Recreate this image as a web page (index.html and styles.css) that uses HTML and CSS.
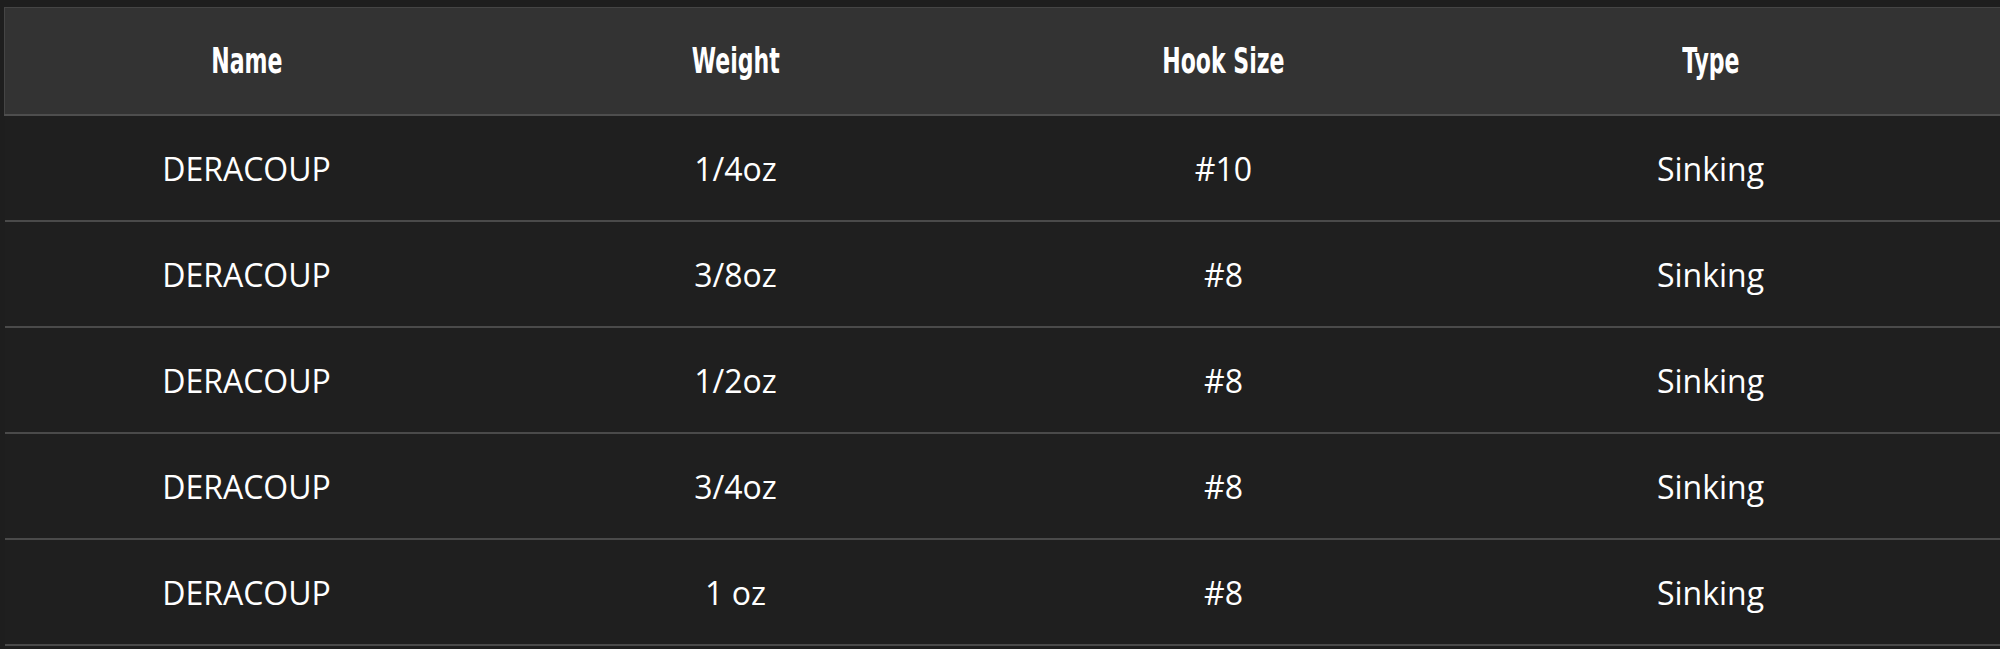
FILE: index.html
```html
<!DOCTYPE html>
<html>
<head>
<meta charset="utf-8">
<link rel="stylesheet" href="styles.css">
</head>
<body>
<div class="wrap">
  <table class="spec">
    <colgroup>
      <col class="c1">
      <col class="c2">
      <col class="c3">
      <col class="c4">
    </colgroup>
    <thead>
      <tr>
        <th><span class="hd">Name</span></th>
        <th><span class="hd">Weight</span></th>
        <th><span class="hd">Hook Size</span></th>
        <th class="last"><span class="hd">Type</span></th>
      </tr>
    </thead>
    <tbody>
      <tr><td>DERACOUP</td><td>1/4oz</td><td>#10</td><td class="last">Sinking</td></tr>
      <tr><td>DERACOUP</td><td>3/8oz</td><td>#8</td><td class="last">Sinking</td></tr>
      <tr><td>DERACOUP</td><td>1/2oz</td><td>#8</td><td class="last">Sinking</td></tr>
      <tr><td>DERACOUP</td><td>3/4oz</td><td>#8</td><td class="last">Sinking</td></tr>
      <tr><td>DERACOUP</td><td>1 oz</td><td>#8</td><td class="last">Sinking</td></tr>
    </tbody>
  </table>
</div>
</body>
</html>
```

FILE: styles.css
```css
html, body {
  margin: 0;
  padding: 0;
  background: #1e1e1e;
}
.wrap {
  padding: 7px 0 0 4px;
  height: 642px;
  background: #1e1e1e;
  overflow: hidden;
}
.spec {
  width: 1996px;
  border-collapse: collapse;
  table-layout: fixed;
  color: #ffffff;
}
.c1 { width: 484px; }
.c2 { width: 494px; }
.c3 { width: 482px; }
.c4 { width: 536px; }
.spec th {
  height: 106px;
  padding: 0;
  background: #333333;
  border-top: 1px solid #454545;
  border-bottom: 2px solid #4e4e4e;
  font-family: "DejaVu Sans Condensed", "Liberation Sans Narrow", sans-serif;
  font-weight: bold;
  font-size: 35px;
  text-align: center;
  vertical-align: middle;
}
.spec th:first-child {
  border-left: 1px solid #454545;
}
.hd {
  display: inline-block;
  transform: scaleX(0.7);
  letter-spacing: 0;
}
.spec td {
  height: 104px;
  padding: 0;
  border-bottom: 2px solid #4a4a4a;
  font-family: "Open Sans", "Noto Sans", sans-serif;
  font-size: 32px;
  text-align: center;
  vertical-align: middle;
  background: #1f1f1f;
}
.spec .last {
  padding-right: 44px;
}
```
